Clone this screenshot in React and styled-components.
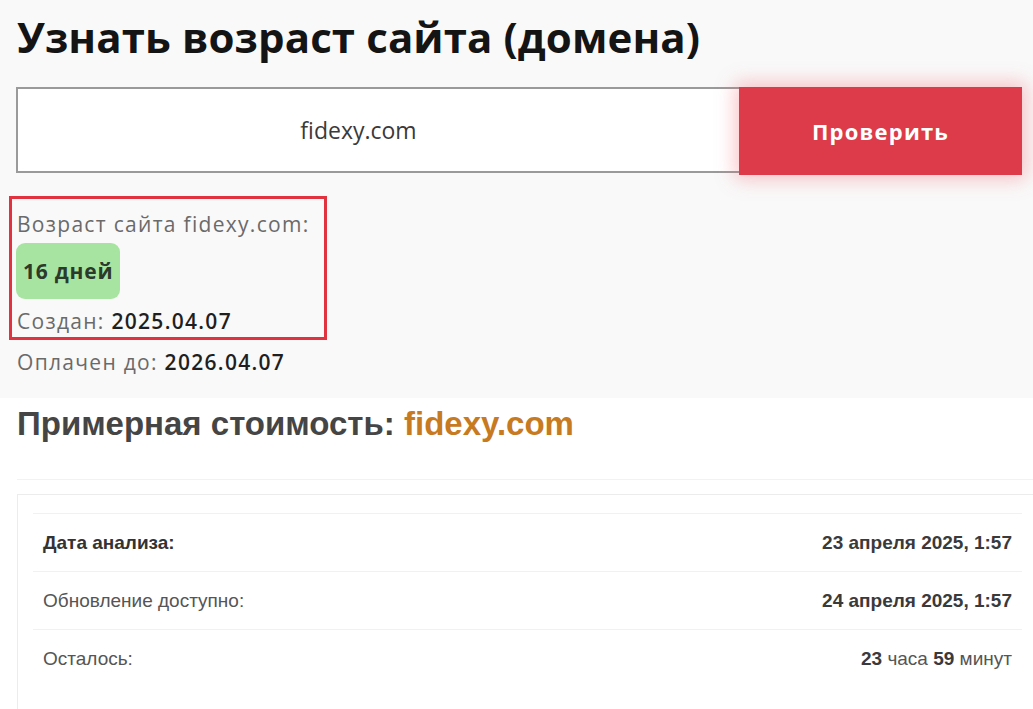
import React from "react";
import styled, { createGlobalStyle } from "styled-components";

const GlobalStyle = createGlobalStyle`
  html, body {
    margin: 0;
    padding: 0;
    background: #ffffff;
  }
  body {
    overflow: hidden;
  }
`;

const Page = styled.div`
  width: 1033px;
  height: 709px;
  overflow: hidden;
  background: #ffffff;
`;

const Top = styled.section`
  background: #f9f9f9;
  padding: 10px 11px 0 16px;
  height: 398px;
  box-sizing: border-box;
  font-family: "Open Sans", "Noto Sans", sans-serif;
`;

const Title = styled.h1`
  margin: 0 0 23px 1px;
  font-size: 42px;
  line-height: 54px;
  font-weight: 700;
  color: #141414;
  letter-spacing: 0.1px;
`;

const SearchRow = styled.form`
  display: flex;
  height: 88px;
`;

const DomainInput = styled.div`
  flex: 1;
  height: 86px;
  box-sizing: border-box;
  border: 2px solid #9a9a9a;
  border-right: none;
  background: #fff;
  display: flex;
  align-items: center;
  justify-content: center;
  padding-right: 40px;
  font-size: 23px;
  color: #3a3a3a;
`;

const CheckButton = styled.button`
  width: 283px;
  height: 88px;
  border: none;
  background: #dd3a4a;
  color: #fff;
  font-family: inherit;
  font-size: 22px;
  font-weight: 700;
  letter-spacing: 1.2px;
  box-shadow: 0 0 18px 4px rgba(240, 90, 100, 0.35);
  cursor: pointer;
`;

const ResultBox = styled.div`
  margin: 21px 0 0 -7px;
  width: 318px;
  box-sizing: border-box;
  border: 3px solid #e0323f;
  padding: 12px 5px 3px 5px;
  display: flex;
  flex-direction: column;
  align-items: flex-start;
`;

const Line = styled.div`
  font-size: 21px;
  line-height: 26px;
  letter-spacing: 1.3px;
  color: #6a6a6a;
  white-space: nowrap;
  margin-left: ${(p) => p.$indent || 0}px;
  margin-top: ${(p) => p.$top || 0}px;
`;

const Value = styled.span`
  color: #1f1f1f;
  font-weight: 600;
`;

const AgeBadge = styled.div`
  margin: 6px 0 9px -1px;
  background: #a8e4a1;
  border-radius: 9px;
  padding: 0 7px;
  height: 56px;
  display: flex;
  align-items: center;
  font-size: 21px;
  font-weight: 700;
  letter-spacing: 0.8px;
  color: #2b3a2b;
`;

const Bottom = styled.section`
  padding: 6px 0 0 17px;
  font-family: "Liberation Sans", Arial, sans-serif;
`;

const PriceTitle = styled.h2`
  margin: 0;
  font-size: 33px;
  line-height: 40px;
  font-weight: 700;
  color: #454545;
`;

const Domain = styled.span`
  color: #c77a1f;
`;

const Divider = styled.div`
  margin-top: 35px;
  height: 1px;
  background: #f2f2f2;
`;

const Card = styled.div`
  margin-top: 14px;
  border: 1px solid #ececec;
  border-right: none;
  padding: 18px 11px 0 15px;
  height: 300px;
`;

const Table = styled.div`
  border-top: 1px solid #f1f1f1;
`;

const Row = styled.div`
  display: flex;
  justify-content: space-between;
  align-items: center;
  height: 57px;
  padding: 0 10px 0 10px;
  border-bottom: ${(p) => (p.$last ? "none" : "1px solid #f1f1f1")};
  font-size: 19px;
  color: #555;
`;

const Label = styled.span`
  font-weight: ${(p) => (p.$bold ? 700 : 400)};
  color: ${(p) => (p.$bold ? "#333" : "#555")};
`;

const RightText = styled.span`
  color: #555;
  b {
    font-weight: 700;
    color: #3a3a3a;
  }
`;

export default function App() {
  return (
    <Page>
      <GlobalStyle />
      <Top>
        <Title>Узнать возраст сайта (домена)</Title>
        <SearchRow onSubmit={(e) => e.preventDefault()}>
          <DomainInput>fidexy.com</DomainInput>
          <CheckButton type="submit">Проверить</CheckButton>
        </SearchRow>
        <ResultBox>
          <Line>Возраст сайта fidexy.com:</Line>
          <AgeBadge>16 дней</AgeBadge>
          <Line>
            Создан: <Value>2025.04.07</Value>
          </Line>
        </ResultBox>
        <Line $indent={1} $top={9}>
          Оплачен до: <Value>2026.04.07</Value>
        </Line>
      </Top>
      <Bottom>
        <PriceTitle>
          Примерная стоимость: <Domain>fidexy.com</Domain>
        </PriceTitle>
        <Divider />
        <Card>
          <Table>
            <Row>
              <Label $bold>Дата анализа:</Label>
              <RightText>
                <b>23 апреля 2025, 1:57</b>
              </RightText>
            </Row>
            <Row>
              <Label>Обновление доступно:</Label>
              <RightText>
                <b>24 апреля 2025, 1:57</b>
              </RightText>
            </Row>
            <Row $last>
              <Label>Осталось:</Label>
              <RightText>
                <b>23</b> часа <b>59</b> минут
              </RightText>
            </Row>
          </Table>
        </Card>
      </Bottom>
    </Page>
  );
}
